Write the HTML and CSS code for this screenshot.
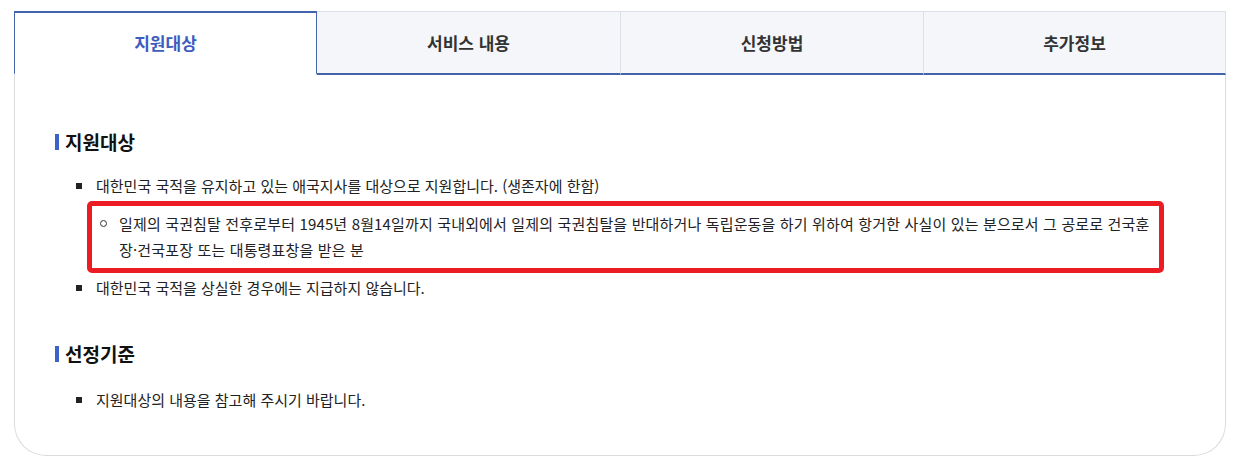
FILE: index.html
```html
<!DOCTYPE html>
<html lang="ko">
<head>
    <meta charset="UTF-8">
    <meta name="viewport" content="width=device-width, initial-scale=1.0">
    <title>지원대상</title>
    <link rel="stylesheet" href="styles.css">
</head>
<body>
    <div class="card">
        <ul class="tabs">
            <li class="tab active">지원대상</li>
            <li class="tab">서비스 내용</li>
            <li class="tab">신청방법</li>
            <li class="tab">추가정보</li>
        </ul>

        <div class="content">
            <h3 class="section-title">지원대상</h3>
            <ul class="dot-list">
                <li>대한민국 국적을 유지하고 있는 애국지사를 대상으로 지원합니다. (생존자에 한함)</li>
                <li class="sub">
                    <ul class="circle-list highlight">
                        <li>일제의 국권침탈 전후로부터 1945년 8월14일까지 국내외에서 일제의 국권침탈을 반대하거나 독립운동을 하기 위하여 항거한 사실이 있는 분으로서 그 공로로 건국훈장·건국포장 또는 대통령표창을 받은 분</li>
                    </ul>
                </li>
                <li>대한민국 국적을 상실한 경우에는 지급하지 않습니다.</li>
            </ul>

            <h3 class="section-title second">선정기준</h3>
            <ul class="dot-list last">
                <li>지원대상의 내용을 참고해 주시기 바랍니다.</li>
            </ul>
        </div>
    </div>
</body>
</html>
```

FILE: styles.css
```css
body {
    margin: 0;
    padding: 11px 12px 0 14px;
    font-family: "Noto Sans CJK KR", "Noto Sans", sans-serif;
    color: #222;
    background-color: #fff;
}

.card {
    border: 1px solid #dcdcdc;
    border-top: none;
    border-radius: 0 0 32px 32px;
    background-color: #fff;
}

/* Tabs */
.tabs {
    list-style: none;
    margin: 0 -1px;
    padding: 0;
    display: grid;
    grid-template-columns: repeat(4, 1fr);
}

.tab {
    height: 61px;
    line-height: 61px;
    text-align: center;
    font-size: 17px;
    font-weight: bold;
    color: #333;
    background-color: #f4f6fa;
    border-top: 1px solid #dde0e6;
    border-left: 1px solid #dde0e6;
    border-bottom: 2px solid #4463ad;
}

.tab:last-child {
    border-right: 1px solid #dde0e6;
}

.tab.active {
    color: #3d5cc0;
    background-color: #fff;
    border: 1px solid #4463ad;
    border-top-width: 2px;
    border-bottom: 2px solid transparent;
    height: 60px;
    line-height: 60px;
}

.tab.active + .tab {
    border-left: none;
}

/* Content */
.content {
    padding: 54px 40px 42px 40px;
}

.section-title {
    margin: 0;
    font-size: 19px;
    line-height: 26px;
    font-weight: bold;
    color: #111;
    display: flex;
    align-items: center;
}

.section-title::before {
    content: "";
    width: 4px;
    height: 16px;
    background-color: #3d63c9;
    margin-right: 6px;
}

.section-title.second {
    margin-top: 40px;
}

.dot-list {
    list-style: none;
    margin: 18px 0 0 0;
    padding: 0 0 0 21px;
}

.dot-list.last {
    margin-top: 20px;
}

.dot-list > li {
    position: relative;
    padding-left: 20px;
    font-size: 15px;
    line-height: 26px;
}

.dot-list > li::before {
    content: "";
    position: absolute;
    left: 0;
    top: 10px;
    width: 6px;
    height: 6px;
    background-color: #222;
}

.dot-list > li.sub {
    padding-left: 0;
    margin: 2px 21px 2px 11px;
}

.dot-list > li.sub::before {
    display: none;
}

.highlight {
    border: 5px solid #ec1c24;
    border-radius: 5px;
}

.circle-list {
    list-style: none;
    margin: 0;
    padding: 5px 8px 5px 8px;
}

.circle-list li {
    position: relative;
    padding-left: 19px;
    font-size: 15px;
    line-height: 26px;
    letter-spacing: 0.15px;
}

.circle-list li::before {
    content: "";
    position: absolute;
    left: 0;
    top: 9px;
    width: 5px;
    height: 5px;
    border: 1px solid #333;
    border-radius: 50%;
}
```
